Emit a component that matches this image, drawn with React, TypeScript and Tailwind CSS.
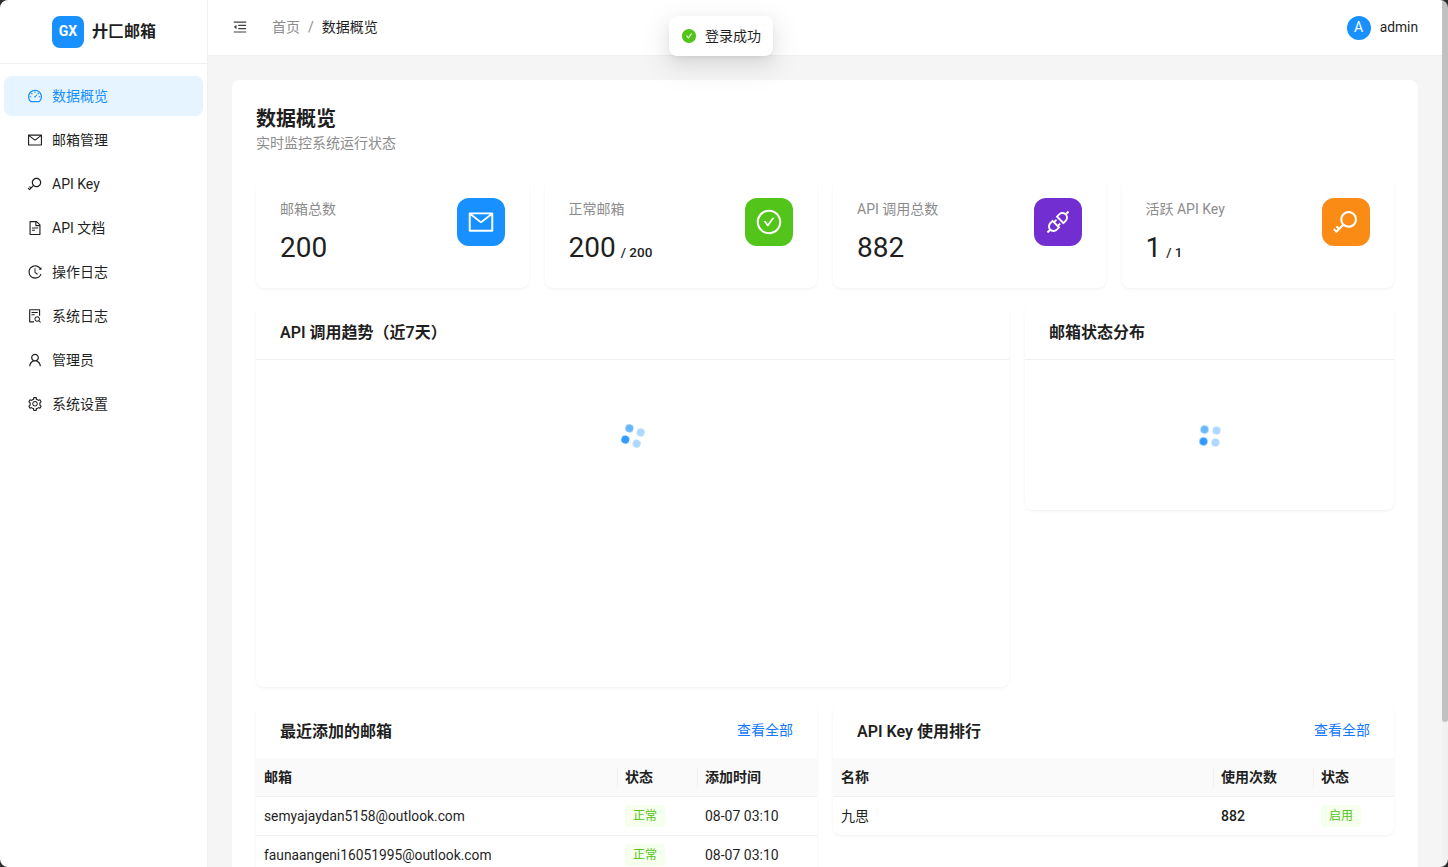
import {
  AiFillCheckCircle,
  AiOutlineApi,
  AiOutlineCheckCircle,
  AiOutlineDashboard,
  AiOutlineFileSearch,
  AiOutlineFileText,
  AiOutlineHistory,
  AiOutlineKey,
  AiOutlineMail,
  AiOutlineMenuFold,
  AiOutlineSetting,
  AiOutlineUser,
} from "react-icons/ai";

const fontFamily = "font-['Roboto','Noto_Sans_CJK_SC',sans-serif]";
const cardShadow = "shadow-[0_1px_2px_rgba(0,0,0,0.03),0_1px_6px_-1px_rgba(0,0,0,0.02),0_2px_4px_rgba(0,0,0,0.02)]";

const navItems = [
  { label: "数据概览", icon: AiOutlineDashboard, active: true },
  { label: "邮箱管理", icon: AiOutlineMail },
  { label: "API Key", icon: AiOutlineKey },
  { label: "API 文档", icon: AiOutlineFileText },
  { label: "操作日志", icon: AiOutlineHistory },
  { label: "系统日志", icon: AiOutlineFileSearch },
  { label: "管理员", icon: AiOutlineUser },
  { label: "系统设置", icon: AiOutlineSetting },
];

const stats = [
  { label: "邮箱总数", value: "200", icon: AiOutlineMail, color: "bg-[#1890ff]" },
  { label: "正常邮箱", value: "200", suffix: "/ 200", icon: AiOutlineCheckCircle, color: "bg-[#52c41a]" },
  { label: "API 调用总数", value: "882", icon: AiOutlineApi, color: "bg-[#722ed1]" },
  { label: "活跃 API Key", value: "1", suffix: "/ 1", icon: AiOutlineKey, color: "bg-[#fa8c16]" },
];

const emails = [
  "semyajaydan5158@outlook.com",
  "faunaangeni16051995@outlook.com",
  "ronaldgarcia8821@outlook.com",
];

function Spinner({ tilt }: { tilt: string }) {
  return (
    <div className={`grid h-[20px] w-[20px] grid-cols-2 gap-[3px] blur-[0.4px] ${tilt}`}>
      <span className="h-[8px] w-[8px] rounded-full bg-[#1890ff] opacity-65" />
      <span className="h-[8px] w-[8px] rounded-full bg-[#1890ff] opacity-35" />
      <span className="h-[8px] w-[8px] rounded-full bg-[#1890ff] opacity-90" />
      <span className="h-[8px] w-[8px] rounded-full bg-[#1890ff] opacity-35" />
    </div>
  );
}

function Badge({ text }: { text: string }) {
  return (
    <span className="inline-block h-[22px] rounded-[4px] bg-[#f6ffed] px-2 text-[12px] leading-[22px] text-[#52c41a]">
      {text}
    </span>
  );
}

function HeadCell({ text, width, divider }: { text: string; width?: string; divider?: boolean }) {
  return (
    <th className={`relative px-2 pt-[2px] text-left text-[14px] font-semibold text-[#1f1f1f] ${width ?? ""}`}>
      {divider && <span className="absolute top-[9px] left-0 h-[20px] w-px bg-[#f0f0f0]" />}
      {text}
    </th>
  );
}

function Card({ title, action, children }: { title: string; action?: boolean; children: React.ReactNode }) {
  return (
    <div className={`rounded-[8px] bg-white ${cardShadow}`}>
      <div className="flex h-[55px] items-center justify-between px-6">
        <h3 className="mt-[2px] text-[16px] font-semibold text-[#1f1f1f]">{title}</h3>
        {action && <a className="text-[14px] text-[#1677ff]">查看全部</a>}
      </div>
      {children}
    </div>
  );
}

function Corner({ className }: { className: string }) {
  return (
    <svg className={`absolute h-[8px] w-[8px] ${className}`} viewBox="0 0 8 8">
      <path d="M0 0H8A8 8 0 0 0 0 8Z" fill="#2e2e2e" />
    </svg>
  );
}

export default function App() {
  return (
    <div className={`${fontFamily} relative flex h-screen overflow-hidden bg-[#f5f5f5] text-[14px] text-[#1f1f1f]`}>
      <aside className="w-[208px] shrink-0 border-r border-[#f0f0f0] bg-white">
        <div className="flex h-[64px] items-center justify-center gap-2 border-b border-[#f0f0f0] pl-[1px]">
          <div className="flex h-8 w-8 items-center justify-center rounded-[8px] bg-[#1890ff] text-[14px] font-bold text-white">
            GX
          </div>
          <span className="text-[16px] font-bold">廾匚邮箱</span>
        </div>
        <nav className="flex flex-col gap-1 px-1 py-3">
          {navItems.map((item) => {
            const Icon = item.icon;
            return (
              <div
                key={item.label}
                className={`flex h-[40px] items-center gap-[9px] rounded-[8px] pl-[23px] ${
                  item.active ? "bg-[#e6f4ff] text-[#1890ff]" : "text-[#1f1f1f]"
                }`}
              >
                <Icon className="h-[16px] w-[16px]" />
                <span>{item.label}</span>
              </div>
            );
          })}
        </nav>
      </aside>

      <div className="flex min-w-0 flex-1 flex-col">
        <header className="flex h-[56px] shrink-0 items-center justify-between border-b border-[#f0f0f0] bg-white pr-6 pl-[24px]">
          <div className="flex items-center gap-[24px]">
            <AiOutlineMenuFold className="mb-[2px] h-4 w-4 text-[#404040]" />
            <div className="flex items-center gap-2 text-[14px]">
              <span className="text-[#8c8c8c]">首页</span>
              <span className="text-[#8c8c8c]">/</span>
              <span>数据概览</span>
            </div>
          </div>
          <div className="flex items-center gap-[9px]">
            <div className="flex h-6 w-6 items-center justify-center rounded-full bg-[#1890ff] text-[14px] text-white">A</div>
            <span className="text-[13.8px]">admin</span>
          </div>
        </header>

        <main className="min-h-0 flex-1 overflow-y-auto p-6">
          <div className="rounded-[8px] bg-white p-6">
            <h1 className="text-[20px] leading-[30px] font-semibold">数据概览</h1>
            <p className="mb-[26px] text-[14px] leading-[18px] text-[#8c8c8c]">实时监控系统运行状态</p>

            <div className="grid grid-cols-4 gap-4">
              {stats.map((s) => {
                const Icon = s.icon;
                return (
                  <div key={s.label} className={`flex h-[110px] justify-between rounded-[8px] bg-white px-6 py-5 ${cardShadow}`}>
                    <div>
                      <div className="text-[14px] leading-[22px] text-[#8c8c8c]">{s.label}</div>
                      <div className="mt-[10px] flex items-baseline gap-[5px]">
                        <span className="text-[28px] leading-[36px] font-normal">{s.value}</span>
                        {s.suffix && <span className="text-[13.5px] font-medium">{s.suffix}</span>}
                      </div>
                    </div>
                    <div className={`flex h-12 w-12 items-center justify-center rounded-[12px] text-white ${s.color}`}>
                      <Icon className="h-[28px] w-[28px]" />
                    </div>
                  </div>
                );
              })}
            </div>

            <div className="mt-4 grid grid-cols-[753px_1fr] items-start gap-4">
              <Card title="API 调用趋势（近7天）">
                <div className="flex h-[328px] justify-center border-t border-[#f0f0f0] pt-[66px]">
                  <Spinner tilt="rotate-[20deg]" />
                </div>
              </Card>
              <Card title="邮箱状态分布">
                <div className="flex h-[151px] justify-center border-t border-[#f0f0f0] pt-[66px]">
                  <Spinner tilt="rotate-[5deg]" />
                </div>
              </Card>
            </div>

            <div className="mt-4 grid grid-cols-2 items-start gap-4">
              <Card title="最近添加的邮箱" action>
                <table className="w-full table-fixed">
                  <thead>
                    <tr className="h-[38px] border-b border-[#f0f0f0] bg-[#fafafa]">
                      <HeadCell text="邮箱" />
                      <HeadCell text="状态" width="w-[80px]" divider />
                      <HeadCell text="添加时间" width="w-[120px]" divider />
                    </tr>
                  </thead>
                  <tbody>
                    {emails.map((e) => (
                      <tr key={e} className="h-[39px] border-b border-[#f0f0f0]">
                        <td className="px-2 pt-[2px] text-[13.8px]">{e}</td>
                        <td className="px-2"><Badge text="正常" /></td>
                        <td className="px-2 pt-[2px] text-[14px]">08-07 03:10</td>
                      </tr>
                    ))}
                  </tbody>
                </table>
              </Card>
              <Card title="API Key 使用排行" action>
                <table className="w-full table-fixed">
                  <thead>
                    <tr className="h-[38px] border-b border-[#f0f0f0] bg-[#fafafa]">
                      <HeadCell text="名称" />
                      <HeadCell text="使用次数" width="w-[100px]" divider />
                      <HeadCell text="状态" width="w-[81px]" divider />
                    </tr>
                  </thead>
                  <tbody>
                    <tr className="h-[39px]">
                      <td className="px-2 pt-[2px] text-[14px]">九思</td>
                      <td className="px-2 pt-[2px] text-[14px] font-medium">882</td>
                      <td className="px-2"><Badge text="启用" /></td>
                    </tr>
                  </tbody>
                </table>
              </Card>
            </div>
          </div>
        </main>
      </div>

      {/* headless chrome hides real scrollbars, so this one is drawn */}
      <div className="w-[6px] shrink-0 bg-[#f1f1f1]">
        <div className="h-[722px] rounded-[3px] bg-[#c1c1c1]" />
      </div>

      <div className="absolute top-[16px] left-[669px] flex h-[40px] items-center gap-2 rounded-[8px] bg-white px-3 shadow-[0_6px_16px_rgba(0,0,0,0.08),0_3px_6px_-4px_rgba(0,0,0,0.12),0_9px_28px_8px_rgba(0,0,0,0.05)]">
        <AiFillCheckCircle className="h-4 w-4 text-[#52c41a]" />
        <span>登录成功</span>
      </div>

      <Corner className="top-0 left-0" />
      <Corner className="top-0 right-0 rotate-90" />
      <Corner className="bottom-0 left-0 -rotate-90" />
      <Corner className="right-0 bottom-0 rotate-180" />
    </div>
  );
}
